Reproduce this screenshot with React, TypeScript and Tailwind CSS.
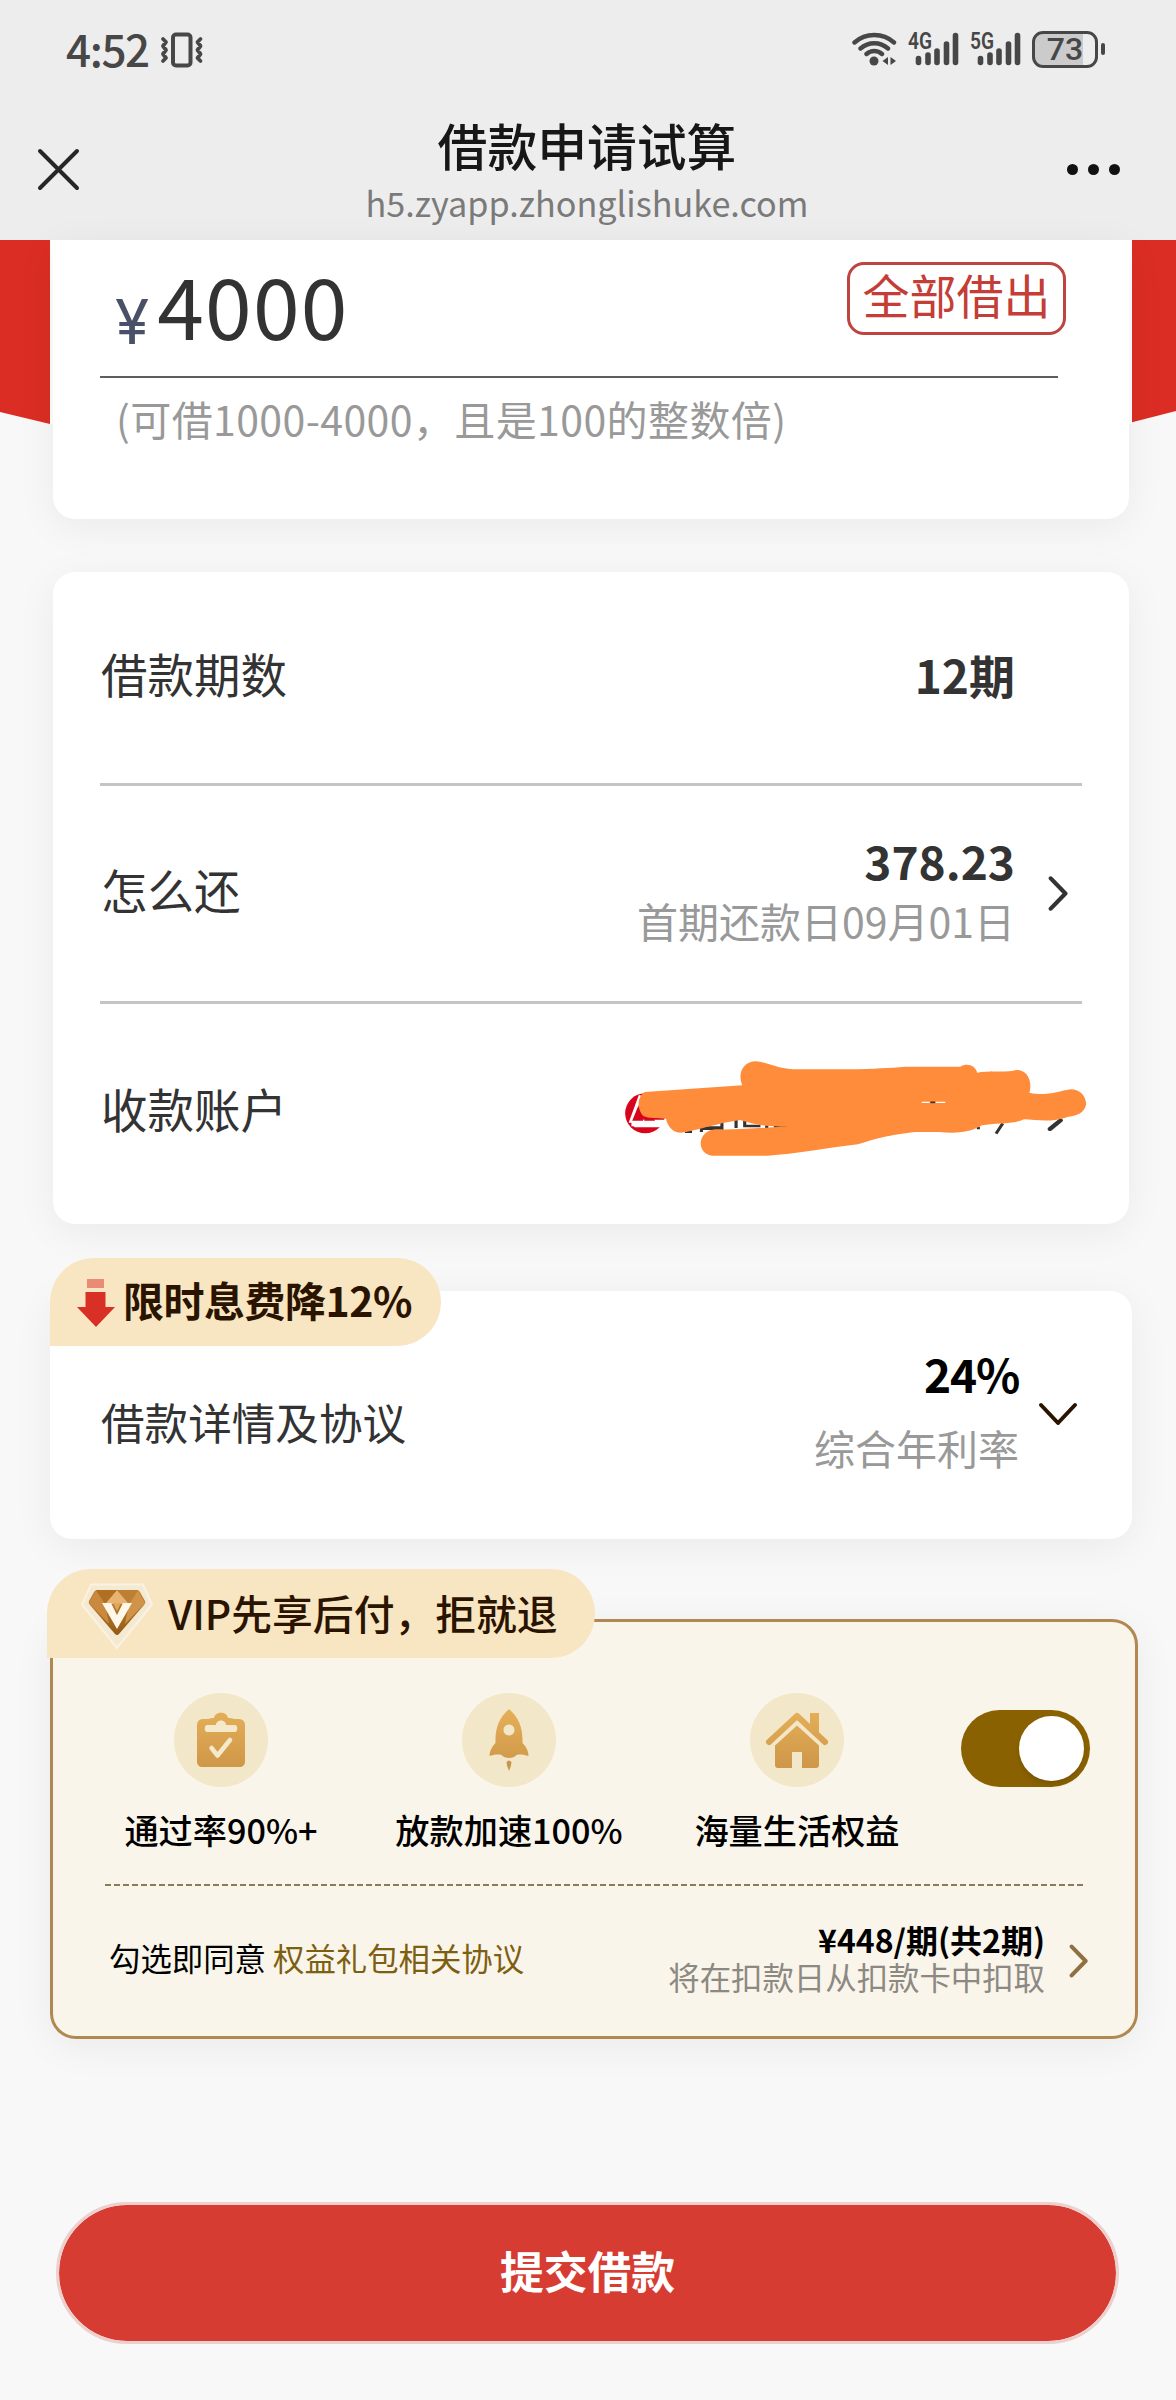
import React, { useState } from 'react';

const font = "font-['Noto_Sans_CJK_SC',sans-serif]";
const shadow = 'shadow-[0_8px_40px_rgba(0,0,0,0.06)]';

const StatusBar: React.FC = () => (
  <div className="flex h-[98px] items-center pl-[66px] pr-[71px] text-[#474747]">
    <span className="-mt-[3px] w-[94px] text-[44px] leading-none font-medium tracking-[-1.400px]">4:52</span>
    <svg className="mt-[2px] h-[36px] w-[44px]" viewBox="0 0 44 36" fill="none" stroke="currentColor">
      <rect x="13" y="2.500" width="17.500" height="31" rx="3" strokeWidth="4" />
      <path d="M3 7l3 3-3 4 3 4-3 4 3 4-3 3M40.500 7l-3 3 3 4-3 4 3 4-3 4 3 3" strokeWidth="3.800" strokeLinecap="round" strokeLinejoin="round" />
    </svg>
    <div className="ml-auto flex items-center gap-[11px]">
      <svg className="h-[36px] w-[45px]" viewBox="0 0 45 36" fill="none" stroke="currentColor" strokeWidth="4.400" strokeLinecap="round">
        <path d="M2.500 11.500c11-10 28.500-10 39.500 0M8.500 17.500c8-7 19.500-7 27.500 0M14.500 23c4.500-4 11-4 15.500 0" />
        <circle cx="22" cy="30" r="4.500" fill="currentColor" stroke="none" />
        <path d="M36 26v8l-5.500-4zM38.500 26v8l5.500-4z" fill="currentColor" stroke="none" />
      </svg>
      <Signal label="4G" />
      <Signal label="5G" />
      <div className="flex items-center gap-[3px]">
        <div className="flex h-[37px] w-[66px] items-center rounded-[11px] border-[3px] border-[#474747] bg-[linear-gradient(to_right,#cbcbcb_80%,transparent_80%)]">
          <span className="w-full text-center font-['Roboto',sans-serif] text-[32px] leading-none font-medium">73</span>
        </div>
        <div className="h-[12px] w-[4px] rounded-full bg-[#474747]" />
      </div>
    </div>
  </div>
);

const Signal: React.FC<{ label: string }> = ({ label }) => (
  <svg className="h-[36px] w-[51px] overflow-visible" viewBox="0 0 51 36">
    <g stroke="currentColor" strokeWidth="5.600" strokeLinecap="round">
      <path d="M10.500 27.500v4M20 24v7.500M29 20v11.500M38.500 13v18.500M47.500 4.500v27" />
    </g>
    <text x="0" y="18" textLength="24" lengthAdjust="spacingAndGlyphs" fontFamily="Roboto, sans-serif" fontSize="23" fontWeight="600" fill="currentColor">
      {label}
    </text>
  </svg>
);

const TitleBar: React.FC = () => (
  <div className="flex h-[142px] items-center justify-between pr-[56px] pl-[37px]">
    <svg className="h-[44px] w-[66px]" viewBox="0 0 66 44" stroke="#262626" strokeWidth="4" strokeLinecap="round">
      <path d="M3 4l37 37M40 4L3 41" />
    </svg>
    <div className="-mr-[4px] flex h-full flex-col items-center pt-[21px]">
      <h1 className="text-[49.800px] leading-[50px] font-medium text-[#171717]">借款申请试算</h1>
      <p className="mt-[15px] text-[34.200px] leading-[36px] whitespace-nowrap text-[#7a7a7a]">h5.zyapp.zhonglishuke.com</p>
    </div>
    <div className="flex w-[53px] gap-[10px]">
      <span className="size-[11px] rounded-full bg-[#111]" />
      <span className="size-[11px] rounded-full bg-[#111]" />
      <span className="size-[11px] rounded-full bg-[#111]" />
    </div>
  </div>
);

const AmountCard: React.FC = () => (
  <section>
    <div className="-mb-[184px] flex h-[184px]">
      <div className="w-[50px] bg-[#db2d23] [clip-path:polygon(0_0,100%_0,100%_100%,0_93.500%)]" />
      <div className="flex-1 bg-white" />
      <div className="w-[44px] bg-[#db2d23] [clip-path:polygon(0_0,100%_0,100%_93%,0_99%)]" />
    </div>
    <div className={`relative mr-[47px] ml-[53px] h-[279px] rounded-b-[22px] bg-white pr-[71px] pl-[47px] ${shadow}`}>
      <div className="flex h-[138px] items-start justify-between border-b-2 border-[#5e5e5e] pt-[21px] pl-[15px]">
        <div className="flex items-baseline text-[84px] leading-[86px] tracking-[1.200px] text-[#333]">
          <span className="mr-[7px] translate-y-[4px] font-['Inter',sans-serif] text-[62px] leading-none text-[#4a5068]">¥</span>
          4000
        </div>
        <button className="-mr-[8px] mt-px flex h-[73px] w-[219px] justify-center rounded-[17px] border-[3px] border-[#bf4440] pt-[3px] text-[47px] leading-[52px] text-[#c43d36]">
          全部借出
        </button>
      </div>
      <p className="mt-[20px] pl-[16px] text-[41px] leading-[40px] tracking-[0.400px] whitespace-nowrap text-[#999]">(可借1000-4000，且是100的整数倍)</p>
    </div>
  </section>
);

const ChevronRight: React.FC<{ className: string }> = ({ className }) => (
  <svg className={className} viewBox="0 0 24 40" fill="none" stroke="currentColor" strokeWidth="4.600" strokeLinecap="round" strokeLinejoin="round">
    <path d="M3 3.500l16 16.500L3 36.500" />
  </svg>
);

// bank logo and account text with the marker strokes over them
const MaskedAccount: React.FC = () => (
  <svg className="-mr-[7px] h-[104px] w-[472px]" viewBox="160 110 1200 312" preserveAspectRatio="none">
    <ellipse cx="219" cy="282" rx="51" ry="60" fill="#d8041c" />
    <path d="M207 228l-24 78h84M184 316h76" fill="none" stroke="#fff" strokeWidth="9" />
    <path d="M182 308h86v16h-76z" fill="#fff" />
    <path d="M186 304l14-40 14 40zM216 304l14-28 14 28z" fill="#d8041c" />
    <path d="M320 337h18M362 338v-10h52v-20M366 325h46M450 300v26M472 302v18h40M528 318v10M546 321h36M1128 312l-17 31M1066 322v8" fill="none" stroke="#333" strokeWidth="8" />
    <path d="M1275 303l-27 26" stroke="#333" strokeWidth="12" strokeLinecap="round" />
    <path
      fill="#ff8c3a"
      d="M218 218L466 198C452 160 470 126 500 126C530 128 550 146 595 150H740C800 148 840 146 880 142H1020C1038 130 1058 138 1063 160C1090 154 1130 158 1152 155C1180 142 1206 172 1196 220C1235 232 1270 216 1300 210C1326 210 1340 232 1340 255C1336 280 1318 290 1295 292C1255 310 1215 302 1182 300C1160 314 1110 310 1075 318C1040 344 1000 341 965 338H905C850 346 820 352 760 375C680 386 600 404 530 409H390C370 406 360 390 360 370C362 348 376 332 398 330C470 332 530 324 590 320C540 324 500 318 460 302C400 312 350 334 310 340C290 340 276 322 272 298C250 296 228 298 214 290C198 270 198 232 218 218Z"
    />
    <path d="M922 249h20M958 249h24" stroke="#fff" strokeWidth="4" />
    <path d="M944 249h12" stroke="#333" strokeWidth="5" />
  </svg>
);

const LoanCard: React.FC = () => (
  <section className={`mt-[53px] mr-[47px] ml-[53px] h-[652px] rounded-[22px] bg-white pr-[47px] pl-[47px] text-[46.500px] text-[#333] ${shadow}`}>
    <div className="flex h-[214px] items-center justify-between border-b-[3px] border-[#c4c4c4] pr-[67px]">
      <span className="-mt-[8px] ml-px leading-none">借款期数</span>
      <span className="-mt-[8px] text-[46px] leading-none font-bold">12期</span>
    </div>
    <div className="flex h-[218px] items-center border-b-[3px] border-[#c4c4c4] pr-[12px]">
      <span className="-mt-[9px] ml-px leading-none">怎么还</span>
      <div className="-mt-[7px] mr-[33px] ml-auto text-right">
        <p className="text-[46px] leading-[60px] font-bold">378.23</p>
        <p className="text-[41px] leading-[60px] text-[#999]">首期还款日09月01日</p>
      </div>
      <ChevronRight className="h-[39px] w-[22px]" />
    </div>
    <div className="flex h-[220px] items-center justify-between">
      <span className="-mt-[11px] ml-px leading-none">收款账户</span>
      <div className="-mt-[12px] -mr-[5px]">
        <MaskedAccount />
      </div>
    </div>
  </section>
);

const DetailCard: React.FC = () => (
  <section className={`mt-[67px] mr-[44px] ml-[50px] h-[248px] rounded-[22px] bg-white ${shadow}`}>
    <div className="relative -top-[33px] flex h-[88px] w-[391px] items-center rounded-t-[44px] rounded-br-[44px] bg-[#f8e5c2] pl-[26px]">
      <svg className="mt-px h-[48px] w-[40px]" viewBox="0 0 40 48">
        <path d="M11 0h17v9H11z" fill="#ea8b76" />
        <path d="M9.500 13h20v15H39L20 48 1 28h8.500z" fill="#d93026" />
      </svg>
      <span className="-mt-[6px] ml-[7px] text-[41px] leading-none font-bold tracking-[-0.500px] whitespace-nowrap text-[#2a1400]">限时息费降12%</span>
    </div>
    <div className="-mt-[33px] flex h-[193px] items-center pr-[53px] pl-[51px]">
      <span className="-mt-[41px] text-[43.600px] leading-none text-[#333]">借款详情及协议</span>
      <div className="-mt-[65px] mr-[18px] ml-auto text-right">
        <p className="text-[46px] leading-[74px] font-bold tracking-[-1.200px] text-black">24%</p>
        <p className="text-[41px] leading-[74px] text-[#999]">综合年利率</p>
      </div>
      <svg className="-mt-[57px] h-[24px] w-[42px]" viewBox="0 0 42 24" fill="none" stroke="#2a1400" strokeWidth="4" strokeLinecap="round" strokeLinejoin="round">
        <path d="M4 3l17 18L38 3" />
      </svg>
    </div>
  </section>
);

const ClipboardIcon: React.FC = () => (
  <>
    <path d="M29 26h5c2-1 4-1 6-1 1-7 13-7 14 0 2 0 4 0 6 1h5c4 0 6 3 6 6v36c0 4-2 6-6 6H29c-4 0-6-2-6-6V32c0-3 2-6 6-6z" fill="url(#gold)" />
    <path d="M33 32h9c0-6 10-6 10 0h9c3 0 3 7 0 7H33c-3 0-3-7 0-7z" fill="#f5e9cb" />
    <path d="M37.500 55l6 7.500L56 47" fill="none" stroke="#f5e9cb" strokeWidth="4.500" strokeLinecap="round" strokeLinejoin="round" />
  </>
);

const RocketIcon: React.FC = () => (
  <>
    <path fillRule="evenodd" fill="url(#gold)" d="M47 16c10 9 14 19 13.500 34 4 4 6 8 6 13-4-1-7-2-12-1-3 4-12 4-15 0-5-1-8 0-12 1 0-5 2-9 6-13C33 35 37 25 47 16zM47 31.500a5.500 5.500 0 1 0 .01 0z" />
    <path d="M44.500 69q2.500-3 5 0 0 4-2.500 9-2.500-5-2.500-9z" fill="#c8964d" />
  </>
);

const HouseIcon: React.FC = () => (
  <>
    <path d="M19 49L47 23 75 49" fill="none" stroke="url(#gold)" strokeWidth="6" strokeLinecap="round" strokeLinejoin="round" />
    <path d="M60 20h9v22l-9-9z" fill="url(#gold)" />
    <path d="M47 32.500l22 20V72q0 3-3 3H52V59H42v16H28q-3 0-3-3V52.500z" fill="url(#gold)" />
  </>
);

const benefits = [
  { label: '通过率90%+', icon: <ClipboardIcon /> },
  { label: '放款加速100%', icon: <RocketIcon /> },
  { label: '海量生活权益', icon: <HouseIcon /> },
];

const VipCard: React.FC = () => {
  const [enabled, setEnabled] = useState(true);

  return (
    <section className={`mt-[80px] mr-[38px] ml-[50px] h-[420px] rounded-[26px] border-[3px] border-[#b08850] bg-[#faf5ea] ${shadow}`}>
      <div className="relative -top-[53px] -left-[6px] flex h-[89px] w-[548px] items-center rounded-t-[44px] rounded-br-[44px] bg-[#f8e5c2] pl-[33px]">
        <svg className="mt-[5px] h-[66px] w-[74px]" viewBox="0 0 74 66">
          <defs>
            <linearGradient id="gem" x1="0" y1="0" x2="0" y2="1">
              <stop offset="0" stopColor="#c98836" />
              <stop offset="1" stopColor="#945a14" />
            </linearGradient>
          </defs>
          <path d="M11 1.500h52l9 20L37 65 2 21.500z" fill="#f4ead4" stroke="#fbf3e2" strokeWidth="2" />
          <path d="M17 7h40q2 0 3 2l5 9q1 2-1 4L39 51q-2 2-4 0L10 22q-2-2-1-4l5-9q1-2 3-2z" fill="url(#gem)" />
          <path d="M37 7l12 14H25z" fill="#e8b473" />
          <path d="M16 7h21L25 21z" fill="#b06f22" />
          <path d="M9 20l7-12 9 13 4 20z" fill="#c98a40" />
          <path d="M58 7H37l12 14z" fill="#bd7f33" />
          <path d="M65 20L58 8l-9 13-4 20z" fill="#cf934a" />
          <path d="M22 20h9l6 12 6-12h9L37 46z" fill="#fff8ea" />
          <path d="M33 20h8l-4 8z" fill="#e0a65f" />
        </svg>
        <span className="-mt-px ml-[14px] text-[40.800px] leading-none font-medium whitespace-nowrap text-[#2a1400]">VIP先享后付，拒就退</span>
      </div>
      <div className="-mt-[18px] flex h-[210px] pl-[24px]">
        {benefits.map(({ label, icon }) => (
          <div key={label} className="flex w-[288px] flex-col items-center">
            <svg className="size-[94px] rounded-full bg-[#f3e7c9]" viewBox="0 0 94 94">
              <defs>
                <linearGradient id="gold" gradientUnits="userSpaceOnUse" x1="0" y1="18" x2="0" y2="78">
                  <stop offset="0" stopColor="#e5ae58" />
                  <stop offset="1" stopColor="#cd9648" />
                </linearGradient>
              </defs>
              {icon}
            </svg>
            <span className="mt-[24px] text-[34.200px] leading-[36px] font-medium whitespace-nowrap text-black">{label}</span>
          </div>
        ))}
        <button
          role="switch"
          aria-checked={enabled}
          onClick={() => setEnabled(!enabled)}
          className={`mt-[17px] ml-[20px] flex h-[77px] w-[129px] items-center rounded-full px-[6px] ${enabled ? 'justify-end bg-[#8a6100]' : 'justify-start bg-gray-300'}`}
        >
          <span className="size-[65px] rounded-full bg-white shadow-md" />
        </button>
      </div>
      <div className="mr-[51px] ml-[52px] -mt-[19px] h-[2px] bg-[repeating-linear-gradient(to_right,#8b7c58_0_6px,transparent_6px_9px)]" />
      <div className="flex h-[150px] items-center pr-[45px] pl-[56px]">
        <p className="-mt-[6px] text-[31.400px] leading-none whitespace-nowrap text-black">
          勾选即同意 <a className="text-[#7d5f12]">权益礼包相关协议</a>
        </p>
        <div className="-mt-[6px] mr-[24px] ml-auto text-right">
          <p className="text-[32px] leading-[38px] font-bold text-black">¥448/期(共2期)</p>
          <p className="text-[31.400px] leading-[38px] text-[#8c8983]">将在扣款日从扣款卡中扣取</p>
        </div>
        <ChevronRight className="h-[36px] w-[21px] text-[#8f7040]" />
      </div>
    </section>
  );
};

export default function App() {
  return (
    <div className={`h-[2400px] w-[1176px] overflow-hidden bg-[#f8f8f8] ${font}`}>
      <header className="bg-[#ededed]">
        <StatusBar />
        <TitleBar />
      </header>
      <main>
        <AmountCard />
        <LoanCard />
        <DetailCard />
        <VipCard />
        <button className="mt-[163px] ml-[56px] flex h-[142px] w-[1063px] items-center justify-center rounded-full border-[3px] border-[#edd0ce] bg-[#d73c32] bg-clip-padding pb-[5px] text-[43.800px] leading-none font-bold text-white">
          提交借款
        </button>
      </main>
    </div>
  );
}
